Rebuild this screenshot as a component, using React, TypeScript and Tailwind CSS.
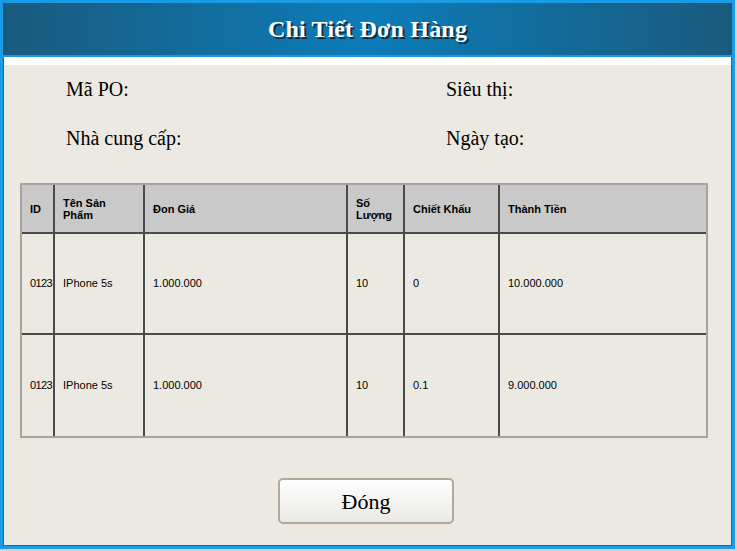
import React from "react";

const cols = [31, 90, 203, 57, 95, 208];
const headers: React.ReactNode[] = [
  "ID",
  <>Tên Sản<br />Phẩm</>,
  "Đon Giá",
  <>Số<br />Lượng</>,
  "Chiết Khấu",
  "Thành Tiền",
];
const rows = [
  ["0123", "IPhone 5s", "1.000.000", "10", "0", "10.000.000"],
  ["0123", "IPhone 5s", "1.000.000", "10", "0.1", "9.000.000"],
];

export default function App() {
  return (
    <div className="w-[737px] h-[551px] bg-[#d4d2cc]">
      <div className="w-[735px] h-[549px] border-[3px] border-[#1a9be6] flex flex-col bg-[#ece9e2]">
        <div
          className="h-[54px] flex items-center justify-center border-b-2 border-[#1a9be6]"
          style={{ background: "linear-gradient(to right, #1a5a7e, #0c7cb8 50%, #1a5a7e)" }}
        >
          <span
            className="text-white font-bold text-[24px] leading-none tracking-[0.2px]"
            style={{ fontFamily: '"Liberation Serif", serif', textShadow: "2px 2px 0 #0a2f45" }}
          >
            Chi Tiết Đơn Hàng
          </span>
        </div>
        <div className="flex-1 flex flex-col border-x border-b border-[#0d6fae]">
          <div className="h-[8px] bg-white" />
          <div
            className="grid grid-cols-[380px_1fr] pl-[62px] pt-[13px] text-[20px] leading-[23px] text-black gap-y-[26px]"
            style={{ fontFamily: '"Liberation Serif", serif' }}
          >
            <div>Mã PO:</div>
            <div>Siêu thị:</div>
            <div>Nhà cung cấp:</div>
            <div>Ngày tạo:</div>
          </div>
          <div
            className="ml-[16px] mt-[33px] w-[688px] border-2 border-[#a7a49e] text-[11px] text-black"
            style={{ fontFamily: '"Liberation Sans", Arial, sans-serif' }}
          >
            <div className="flex h-[49px] bg-[#c9c9c9] border-b-2 border-[#4a4a4a] font-bold leading-[12px]">
              {headers.map((h, i) => (
                <div
                  key={i}
                  className={`flex items-center overflow-hidden ${i === 0 ? "pl-[8px]" : "pl-[8px] border-l-2 border-[#4a4a4a]"}`}
                  style={{ width: cols[i] }}
                >
                  <span>{h}</span>
                </div>
              ))}
            </div>
            {rows.map((r, ri) => (
              <div
                key={ri}
                className={`flex h-[101px] ${ri === 0 ? "border-b-2 border-[#4a4a4a]" : ""}`}
              >
                {r.map((c, i) => (
                  <div
                    key={i}
                    className={`flex items-center whitespace-nowrap ${i === 0 ? "pl-[8px] tracking-[-0.6px]" : "pl-[8px] overflow-hidden border-l-2 border-[#4a4a4a]"}`}
                    style={{ width: cols[i] }}
                  >
                    {c}
                  </div>
                ))}
              </div>
            ))}
          </div>
          <div className="flex mt-[40px] pl-[274px]">
            <button
              className="w-[176px] h-[46px] rounded-[5px] border-2 border-[#b3a996] text-[22px] text-black"
              style={{
                fontFamily: '"Liberation Serif", serif',
                background: "linear-gradient(to bottom, #ffffff, #f4f4f2 50%, #e9e8e4)",
              }}
            >
              Đóng
            </button>
          </div>
        </div>
      </div>
    </div>
  );
}
